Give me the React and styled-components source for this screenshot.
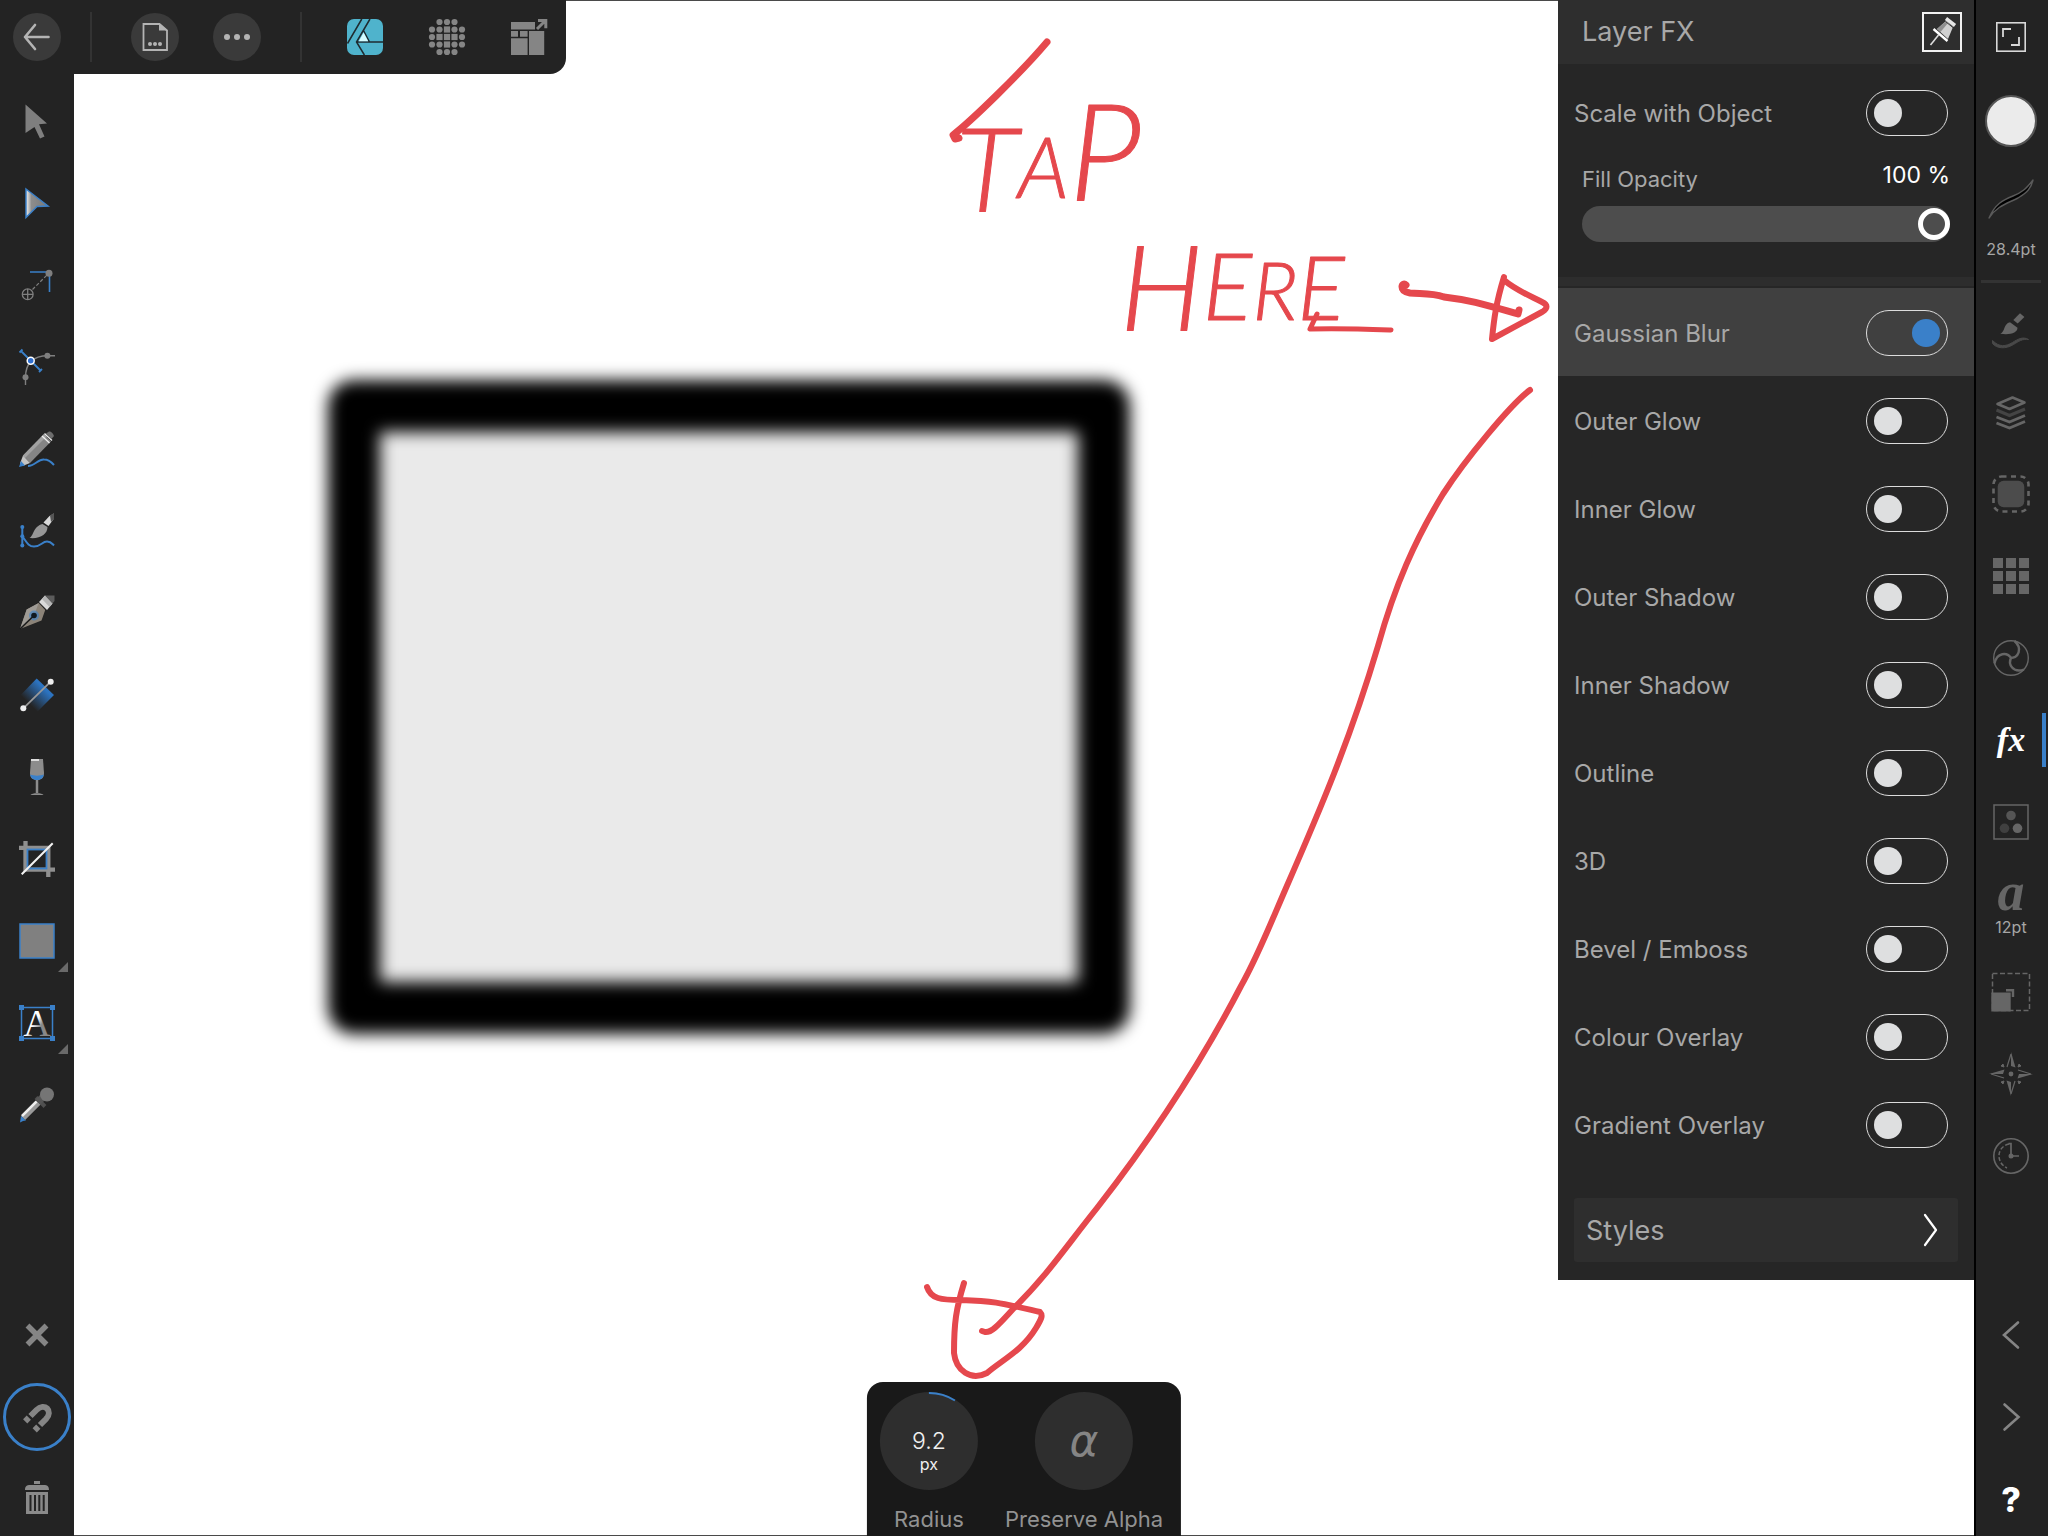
import React, { useState } from "react";
import styled, { createGlobalStyle } from "styled-components";

const BLUE = "#3a80c9";
const GREY = "#7f7f7f";
const DIM = "#666";

const Icon = ({ children, size = 48 }) => (
  <svg width={size} height={size} viewBox="0 0 48 48" fill="none" aria-hidden="true">
    {children}
  </svg>
);

const BackIcon = () => (
  <Icon>
    <path d="M35.5 24H12M22 12l-10 12 10 12" stroke="#b4b4b4" strokeWidth="2.6" strokeLinecap="round" strokeLinejoin="round" />
  </Icon>
);

const DocumentIcon = () => (
  <Icon>
    <path d="M12.5 11h16l7.500 6.500v19.500H12.500z" stroke="#b4b4b4" strokeWidth="1.800" />
    <path d="M28 10.500v7h8.500z" fill="#b4b4b4" />
    {[19, 24, 29].map((x) => <circle key={x} cx={x} cy="31" r="2" fill="#b4b4b4" />)}
  </Icon>
);

const MoreIcon = () => (
  <Icon>
    {[14, 24, 34].map((x) => <circle key={x} cx={x} cy="24" r="3" fill="#b4b4b4" />)}
  </Icon>
);

const DesignerIcon = () => (
  <Icon>
    <rect x="6" y="6" width="36" height="36" rx="7" fill="#4fb3cc" />
    <path d="M20.800 6L6.500 30.500M29 6L15.500 29l7.900 13M15.500 29H42M22.500 17.500L28.500 29" stroke="#1f2b30" strokeWidth="1.500" />
    <path d="M22.600 19.500l4.600 8.800h-9.400z" fill="#d6fcff" />
  </Icon>
);

const PixelIcon = () => {
  const steps = [9, 16.5, 24, 31.500, 39];
  return (
    <Icon>
      {steps.map((y, r) =>
        steps.map((x, c) => {
          const d = Math.abs(r - 2) + Math.abs(c - 2);
          if (d === 4) return null;
          return d < 2
            ? <rect key={`${r}${c}`} x={x - 3.1} y={y - 3.1} width="6.200" height="6.200" fill="#858585" />
            : <circle key={`${r}${c}`} cx={x} cy={y} r="3.1" fill="#858585" />;
        })
      )}
    </Icon>
  );
};

const ExportIcon = () => (
  <Icon>
    <path d="M6 9h24v7.500H6zM6 18h7v5.700H6zM15 18h7.600v5.700H15zM6 25.300h16.600V42H6zM24 18h15.200v24H24z" fill="#858585" />
    <path d="M32 16l7.500-7.500M33 7.500h7.800v7.800" stroke="#858585" strokeWidth="3" />
  </Icon>
);

const MoveIcon = () => (
  <Icon>
    <path d="M12.500 7.500L34 26.500l-8 .8 5.500 12.200-4.500 2-5.500-11.500-9 6z" fill={GREY} />
  </Icon>
);

const NodeIcon = () => (
  <Icon>
    <defs>
      <linearGradient id="node" x1="0" x2="1">
        <stop offset="0" stopColor="#f2f2f2" />
        <stop offset=".25" stopColor="#8d8d8d" />
        <stop offset="1" stopColor="#777" />
      </linearGradient>
    </defs>
    <path d="M13 10l22 17-11 .5L13 38.500z" fill="url(#node)" stroke={BLUE} strokeWidth="1.500" />
  </Icon>
);

const PointTransformIcon = () => (
  <Icon>
    <path d="M17 11h19.500v20" stroke={BLUE} strokeWidth="1.600" />
    <path d="M19.500 28.500L35 13" stroke={GREY} strokeWidth="1.200" strokeDasharray="3.500 2" />
    <circle cx="36" cy="12.300" r="3.500" fill={GREY} />
    <circle cx="14.700" cy="33.300" r="5.400" stroke={GREY} strokeWidth="1.300" />
    <path d="M14.700 28v10.600M9.400 33.300H20" stroke={GREY} strokeWidth="1.300" />
  </Icon>
);

const CornerIcon = () => (
  <Icon>
    <path d="M42 12.700h-7C24 12.700 12.500 17 12.500 34.500V42" stroke={GREY} strokeWidth="1.400" />
    <circle cx="34.400" cy="12.700" r="3" fill={GREY} />
    <circle cx="12.500" cy="34.300" r="3" fill={GREY} />
    <path d="M8 8l19.500 19.500M6.500 9.500l3-3M26 29l3-3" stroke={BLUE} strokeWidth="1.800" />
    <circle cx="17.700" cy="17.700" r="3.500" fill="#2f6fd0" stroke="#fff" strokeWidth="1.500" />
  </Icon>
);

const PencilIcon = () => (
  <Icon>
    <path d="M15 41c7 0 10-7 16-6.500 4 0 7 2 10 5.500" stroke={BLUE} strokeWidth="2" />
    <path d="M10 30.500L31 9l7 7.500-21 21.500z" fill="#858585" />
    <path d="M10 30.500L31 9l2.500 2.600-21.500 21.500z" fill="#a2a2a2" />
    <path d="M10 30.500l7 7.500-7.500 3-2.500-2.500z" fill="#c4c4c4" />
    <path d="M8 36l4 4.500-6 1.500z" fill={BLUE} />
    <path d="M29 11l7.500 7M31.500 8.500l7.500 7" stroke="#eee" strokeWidth="1.300" />
    <path d="M33 8.500L36 6.500q3-.5 5 4.500l-2.500 3z" fill="#6d6d6d" />
  </Icon>
);

const VectorBrushIcon = () => (
  <Icon>
    <path d="M9.300 20v19M9.300 29.300C13 34 15 39.500 21 39.500c7 0 8-5 13-5 4 0 5 2 7 4" stroke={BLUE} strokeWidth="2" />
    {[20, 29.300, 38.500].map((y) => <circle key={y} cx="9.300" cy={y} r="2" fill={BLUE} />)}
    <path d="M30.500 15.500l6-6.500 4.500-2.500v5L35.500 19z" fill="#d9d9d9" />
    <path d="M37 8.500L41 6v6l-3 3z" fill="#555" />
    <path d="M29.500 17l5 3c0 7-7 12-18 11 5-3 3-11 13-14z" fill="#979797" />
  </Icon>
);

const PenIcon = () => (
  <Icon>
    <path d="M7 40l6.700-19.500 12-6.500 6.500 7-3.700 10.500z" fill="#8b8378" />
    <path d="M7 40l6.700-19.500 12-6.500-4.700 12.500z" fill="#9f9b95" />
    <circle cx="21" cy="26.500" r="5" fill={BLUE} opacity=".6" />
    <path d="M7 40l14-13.500" stroke="#1b1b1b" strokeWidth="1.600" />
    <circle cx="21" cy="26.500" r="2.800" fill="#101820" />
    <path d="M26 13l6-6.500 7.500 8-5.500 6.500z" fill="#dadada" />
    <path d="M29 10l3-3.500 7.500 8-3 3.500z" fill="#b5b5b5" />
    <path d="M32 6.500h9.500v5.500l-2 2.500z" fill="#5c5c5c" />
  </Icon>
);

const GradientIcon = () => (
  <Icon>
    <defs>
      <linearGradient id="fillgrad" x1="1" y1="0" x2="0" y2="1">
        <stop offset=".3" stopColor="#2c73c0" />
        <stop offset=".75" stopColor="#242424" />
      </linearGradient>
    </defs>
    <path d="M23.700 7.500L41 24 24.300 40.700 7.700 24z" fill="url(#fillgrad)" />
    <path d="M10.300 37.300L37.700 10.700" stroke="#999" strokeWidth="1.800" />
    <circle cx="10.300" cy="37.300" r="3" fill="#eee" />
    <circle cx="37.700" cy="10.700" r="3" fill="#eee" />
  </Icon>
);

const GlassIcon = () => (
  <Icon>
    <path d="M18 6h12l1 14c0 5-3 7-7 7s-7-2-7-7z" fill="#8c8c8c" />
    <path d="M18 6h8v2h-8z" fill="#ddd" />
    <path d="M17.200 21.500c4 1.500 9.600 1.500 13.600 0-.5 4-3.500 5.500-6.800 5.500s-6.300-1.500-6.800-5.500z" fill={BLUE} />
    <path d="M24 27v13" stroke="#8c8c8c" strokeWidth="2.500" />
    <path d="M17.500 42c1-2.500 12-2.500 13 0z" fill="#8c8c8c" />
  </Icon>
);

const CropIcon = () => (
  <Icon>
    <path d="M12.500 6v28.700H42M6 12.800h29.300V42" stroke="#8f8f8f" strokeWidth="4.300" />
    <rect x="14.500" y="14.500" width="19" height="19" stroke={BLUE} strokeWidth="1.800" />
    <path d="M8.700 39.300l31-31" stroke="#f4f4f4" strokeWidth="2" />
  </Icon>
);

const RectangleIcon = () => (
  <Icon>
    <rect x="7" y="7" width="34" height="34" fill="#808080" stroke={BLUE} strokeWidth="1.500" />
  </Icon>
);

const TextFrameIcon = () => (
  <Icon>
    <defs>
      <linearGradient id="letter" x1="0" y1="0" x2="1" y2="1">
        <stop offset=".45" stopColor="#fff" />
        <stop offset=".6" stopColor="#888" />
      </linearGradient>
    </defs>
    <rect x="8.500" y="8.500" width="31" height="31" stroke={BLUE} strokeWidth="1.500" />
    <path d="M6 6h5v5H6zM37 6h5v5h-5zM6 37h5v5H6zM37 37h5v5h-5z" fill={BLUE} />
    <text x="24" y="37" textAnchor="middle" fontFamily="Liberation Serif, serif" fontSize="38" fill="url(#letter)">A</text>
  </Icon>
);

const DropperIcon = () => (
  <Icon>
    <path d="M25.500 21.500L10 37" stroke="#999" strokeWidth="6" />
    <path d="M23.500 20.500L9 35" stroke="#eee" strokeWidth="2.500" />
    <path d="M8 35l5 4.500-3 .5-3 1.500z" fill={BLUE} />
    <path d="M23 16.500l9 9" stroke="#4f4f4f" strokeWidth="4" />
    <path d="M25 21l7-7" stroke="#555" strokeWidth="7" />
    <circle cx="34" cy="13.500" r="7" fill="#757575" />
  </Icon>
);

const CloseIcon = () => (
  <Icon>
    <path d="M14.500 14.500l19 19M33.500 14.500l-19 19" stroke="#858585" strokeWidth="5.500" />
  </Icon>
);

const MagnetIcon = () => (
  <Icon>
    <path d="M17.500 23l6-6c8-8 17 1 9.500 9l-6 6" stroke="#858585" strokeWidth="6" />
    <path d="M15.800 24.700l-3.600 3.600M25.300 33.700l-3.600 3.600" stroke="#858585" strokeWidth="6" />
  </Icon>
);

const TrashIcon = () => (
  <Icon>
    <path d="M21 6h6v3h-6zM12 15c0-4 2-5 5-5h14c3 0 5 1 5 5z" fill="#8a8a8a" />
    <path d="M13 17h22v22H13z" fill="#8a8a8a" />
    <path d="M17.500 20v16M22 20v16M26.300 20v16M30.700 20v16" stroke="#232323" strokeWidth="2" />
  </Icon>
);

const FullscreenIcon = () => (
  <Icon>
    <rect x="9.800" y="9.800" width="28.400" height="28.400" stroke="#d8d8d8" strokeWidth="1.600" />
    <path d="M16 24v-8h8M24 32h8v-8" stroke="#d8d8d8" strokeWidth="1.800" />
  </Icon>
);

const StrokeIcon = () => (
  <svg width="52" height="44" viewBox="0 0 52 44" aria-hidden="true">
    <path d="M4 41c6-14 14-18 24-22 9-3.500 13-7 20-16-2 8-5 12-15 18-12 6-21 8-29 20z" fill="#000" stroke="#5a5a5a" strokeWidth="1.400" strokeLinejoin="round" />
  </svg>
);

const BrushesIcon = () => (
  <Icon>
    <path d="M5.500 34.500c7 7 13 6 20 2 6-4 11-6 16-3-6-1-10 2-15 5-8 5-17 4-21-1z" fill="#484848" stroke="#484848" strokeWidth="1" />
    <path d="M13.300 27.700c5-2 3-10 9.700-11.500l7.500 5.500c0 5-7 7.500-17.200 6z" fill={DIM} />
    <path d="M26.300 14L33 7.300l4.400 3.700-6.700 6.500z" fill={DIM} />
  </Icon>
);

const LayersIcon = () => (
  <Icon>
    <path d="M25.500 9.500l12 5-15 6.500-12-5z" stroke={DIM} strokeWidth="2.600" strokeLinejoin="round" />
    <path d="M9.500 22l13 5.500 15.500-6.500" stroke="#444" strokeWidth="3" />
    <path d="M9.500 29l13 5 15.500-6.500M9.500 35l13 5 15.500-6.500" stroke={DIM} strokeWidth="2.800" />
  </Icon>
);

const SelectionIcon = () => (
  <Icon>
    <rect x="10.700" y="10.700" width="26.600" height="26.600" rx="6" fill="#4c4c4c" />
    <rect x="6.500" y="6.500" width="35" height="35" rx="8" stroke={DIM} strokeWidth="2.600" strokeDasharray="5 4.500" />
  </Icon>
);

const SwatchesIcon = () => (
  <Icon>
    {[6, 19, 32].map((y) => [6, 19, 32].map((x) => (
      <rect key={`${x}${y}`} x={x} y={y} width="10" height="10" fill={DIM} />
    )))}
  </Icon>
);

const AdjustIcon = () => (
  <Icon>
    <circle cx="24" cy="24" r="17.300" stroke={DIM} strokeWidth="1.400" />
    {[0, 120, 240].map((a) => (
      <path key={a} d="M23 24c8.500 0 13-9.500 4.500-17" transform={`rotate(${a} 24 24)`} stroke={DIM} strokeWidth="2.400" />
    ))}
  </Icon>
);

const ChannelsIcon = () => (
  <Icon>
    <rect x="7" y="7" width="34" height="34" stroke={DIM} strokeWidth="1.500" />
    <circle cx="24" cy="17.500" r="4.800" fill="#555" />
    <circle cx="17.500" cy="30.300" r="4.800" fill="#404040" />
    <circle cx="30.500" cy="30.300" r="4.800" fill={DIM} />
  </Icon>
);

const TransformIcon = () => (
  <Icon>
    <rect x="5.500" y="5.500" width="37" height="37" stroke={DIM} strokeWidth="1.500" strokeDasharray="5 2.500" />
    <path d="M4.300 24.500h19.400v19H4.300z" fill={DIM} />
    <path d="M19 22.300h7v6.700" stroke={DIM} strokeWidth="2.400" />
  </Icon>
);

const NavigatorIcon = () => (
  <Icon>
    {[0, 90, 180, 270].map((a) => (
      <g key={a} transform={`rotate(${a} 24 24)`}>
        <path d="M24 4l-4 13" stroke={DIM} strokeWidth="1.200" />
        <path d="M24 2v14l4.500 1.500z" fill={DIM} />
        <path d="M32 14l2 2-3 1z" stroke={DIM} strokeWidth="1" fill={DIM} />
      </g>
    ))}
    <circle cx="24" cy="24" r="2.400" fill={DIM} />
  </Icon>
);

const HistoryIcon = () => (
  <Icon>
    <circle cx="24" cy="24" r="17.200" stroke={DIM} strokeWidth="1.600" />
    <path d="M22 12c-13 3-13 19-2 24" stroke={DIM} strokeWidth="1.500" strokeDasharray="4 2" />
    <path d="M21.500 11.700h2.500V24h8" stroke={DIM} strokeWidth="1.700" />
    <circle cx="24" cy="24" r="2.500" fill={DIM} />
  </Icon>
);

const PrevIcon = () => (
  <Icon>
    <path d="M31 11.500L17 24l14 12.500" stroke="#858585" strokeWidth="2.600" strokeLinecap="round" />
  </Icon>
);

const NextIcon = () => (
  <Icon>
    <path d="M17.500 11.500l14 12.500-14 12.500" stroke="#858585" strokeWidth="2.600" strokeLinecap="round" />
  </Icon>
);

const PinIcon = () => (
  <svg width="36" height="36" viewBox="0 0 36 36" aria-hidden="true">
    <path d="M6.500 31l8-10" stroke="#ddd" strokeWidth="1.600" />
    <path d="M13 15l9-8 7 6-5 12z" fill="#cfcfcf" />
    <path d="M13 15l9-8 2 2-7.500 9z" fill="#8e8e8e" />
    <path d="M9.500 15l14 12" stroke="#fff" strokeWidth="2.400" />
    <path d="M22 4.500l9 7" stroke="#e5e5e5" strokeWidth="3.500" />
    <path d="M21.500 7.500l8 6.500" stroke="#333" strokeWidth="1" />
  </svg>
);

const tools = [
  { name: "Move", icon: <MoveIcon /> },
  { name: "Node", icon: <NodeIcon /> },
  { name: "Point transform", icon: <PointTransformIcon /> },
  { name: "Corner", icon: <CornerIcon /> },
  { name: "Pencil", icon: <PencilIcon /> },
  { name: "Vector brush", icon: <VectorBrushIcon /> },
  { name: "Pen", icon: <PenIcon /> },
  { name: "Fill", icon: <GradientIcon /> },
  { name: "Transparency", icon: <GlassIcon /> },
  { name: "Vector crop", icon: <CropIcon /> },
  { name: "Rectangle", icon: <RectangleIcon />, more: true },
  { name: "Frame text", icon: <TextFrameIcon />, more: true },
  { name: "Colour picker", icon: <DropperIcon /> },
];

const effectNames = [
  "Gaussian Blur",
  "Outer Glow",
  "Inner Glow",
  "Outer Shadow",
  "Inner Shadow",
  "Outline",
  "3D",
  "Bevel / Emboss",
  "Colour Overlay",
  "Gradient Overlay",
];

function Artwork() {
  return (
    <Canvas viewBox="74 0 1900 1536" preserveAspectRatio="xMidYMid meet">
      <defs>
        <filter id="gaussian" x="-10%" y="-10%" width="120%" height="120%" colorInterpolationFilters="sRGB">
          <feGaussianBlur stdDeviation="8" />
        </filter>
      </defs>
      <rect x="354" y="406" width="750" height="602" fill="#eaeaea" stroke="#000" strokeWidth="52" strokeLinejoin="round" filter="url(#gaussian)" />
      <Ink>
        <path d="M1047 42C1020 74 970 122 953 135l2 4 4-1" strokeWidth="7" />
        <path d="M1406 285c-4-4-8 6 4 8 12 1 22 0 34 4 26 3 42 8 74 17l1-4" strokeWidth="7" />
        <path d="M1504 277c-8 26-10 42-12 62l50-27c6-4 6-7 0-10-16-8-28-13-38-22" />
        <path d="M1317 314l-7 15c28-1 54 0 81 1" strokeWidth="5" />
        <path d="M1530 390C1510 405 1465 460 1443 494C1415 540 1395 585 1378 646C1350 740 1320 810 1286 888C1270 925 1257 958 1241 986C1200 1065 1150 1140 1097 1208C1065 1248 1045 1278 1014 1308C1000 1323 992 1333 985 1332L982 1331" />
        <path d="M927 1287c4 12 14 13 34 13 34 1 40 3 79 12 3 3 2 6-4 16-14 23-34 32-49 45-16 8-31-2-33-20 0-30 2-44 10-70" />
      </Ink>
      <Note x="956" y="212">
        <tspan fontSize="116">T</tspan>
        <tspan fontSize="84" dy="-14">A</tspan>
        <tspan fontSize="134" dy="2">P</tspan>
      </Note>
      <Note x="1120" y="330">
        <tspan fontSize="118">H</tspan>
        <tspan fontSize="92" dy="-10">E</tspan>
        <tspan fontSize="80">R</tspan>
        <tspan fontSize="88">E</tspan>
      </Note>
    </Canvas>
  );
}

function LayerFx() {
  const [scale, setScale] = useState(false);
  const [opacity, setOpacity] = useState(100);
  const [enabled, setEnabled] = useState({ "Gaussian Blur": true });

  const toggle = (name) => setEnabled({ ...enabled, [name]: !enabled[name] });

  return (
    <Panel aria-label="Layer FX">
      <PanelHeader>
        <PanelTitle>Layer FX</PanelTitle>
        <PinButton aria-label="Pin panel"><PinIcon /></PinButton>
      </PanelHeader>
      <General>
        <EffectRow>
          Scale with Object
          <Switch type="checkbox" checked={scale} onChange={() => setScale(!scale)} />
        </EffectRow>
        <Opacity>
          <OpacityHead>
            <label htmlFor="opacity">Fill Opacity</label>
            <output htmlFor="opacity">{opacity} %</output>
          </OpacityHead>
          <Slider id="opacity" type="range" min="0" max="100" value={opacity} onChange={(e) => setOpacity(e.target.value)} />
        </Opacity>
      </General>
      <Divider />
      {effectNames.map((name) => (
        <EffectRow key={name} $active={name === "Gaussian Blur"}>
          {name}
          <Switch type="checkbox" checked={!!enabled[name]} onChange={() => toggle(name)} />
        </EffectRow>
      ))}
      <StylesButton>
        Styles
        <svg width="18" height="36" viewBox="0 0 18 36" fill="none" aria-hidden="true">
          <path d="M3 3l11 15L3 33" stroke="#fff" strokeWidth="2.200" strokeLinecap="round" strokeLinejoin="round" />
        </svg>
      </StylesButton>
    </Panel>
  );
}

function App() {
  return (
    <Workspace>
      <GlobalStyle />
      <Rail aria-label="Tools">
        <RailTop>
          <RoundButton aria-label="Back"><BackIcon /></RoundButton>
        </RailTop>
        {tools.map((tool) => (
          <RailButton key={tool.name} aria-label={tool.name} $more={tool.more}>{tool.icon}</RailButton>
        ))}
        <RailBottom>
          <RailButton aria-label="Deselect"><CloseIcon /></RailButton>
          <RailButton aria-label="Snapping" $ring><MagnetIcon /></RailButton>
          <RailButton aria-label="Delete"><TrashIcon /></RailButton>
        </RailBottom>
      </Rail>

      <Stage>
        <Artwork />
        <TopBar>
          <Separator />
          <Slot><RoundButton aria-label="Document"><DocumentIcon /></RoundButton></Slot>
          <Slot><RoundButton aria-label="Edit"><MoreIcon /></RoundButton></Slot>
          <Separator />
          <RailButton aria-label="Designer persona"><DesignerIcon /></RailButton>
          <RailButton aria-label="Pixel persona"><PixelIcon /></RailButton>
          <RailButton aria-label="Export persona"><ExportIcon /></RailButton>
        </TopBar>
        <LayerFx />
        <ContextBar>
          <Control>
            <Dial aria-label="Radius">
              <Arc viewBox="0 0 98 98" aria-hidden="true">
                <path d="M49 1a48 48 0 0 1 26 7.500" fill="none" stroke={BLUE} strokeWidth="2" />
              </Arc>
              9.2
              <small>px</small>
            </Dial>
            Radius
          </Control>
          <Control>
            <Dial aria-label="Preserve Alpha" $symbol>α</Dial>
            Preserve Alpha
          </Control>
        </ContextBar>
      </Stage>

      <Rail as="aside" aria-label="Studios" $right>
        <RailTop>
          <RailButton aria-label="Full screen"><FullscreenIcon /></RailButton>
        </RailTop>
        <RailButton aria-label="Colour"><FillSwatch /></RailButton>
        <StrokeButton aria-label="Stroke 28.4pt">
          <StrokeIcon />
          28.4pt
        </StrokeButton>
        <RailRule />
        <RailButton aria-label="Brushes"><BrushesIcon /></RailButton>
        <RailButton aria-label="Layers"><LayersIcon /></RailButton>
        <RailButton aria-label="Selection"><SelectionIcon /></RailButton>
        <RailButton aria-label="Swatches"><SwatchesIcon /></RailButton>
        <RailButton aria-label="Adjustments"><AdjustIcon /></RailButton>
        <FxButton aria-label="Layer FX">fx</FxButton>
        <RailButton aria-label="Channels"><ChannelsIcon /></RailButton>
        <TextButton aria-label="Text 12pt">
          <em>a</em>
          12pt
        </TextButton>
        <RailButton aria-label="Transform"><TransformIcon /></RailButton>
        <RailButton aria-label="Navigator"><NavigatorIcon /></RailButton>
        <RailButton aria-label="History"><HistoryIcon /></RailButton>
        <RailBottom>
          <RailButton aria-label="Undo"><PrevIcon /></RailButton>
          <RailButton aria-label="Redo"><NextIcon /></RailButton>
          <HelpButton aria-label="Help">?</HelpButton>
        </RailBottom>
      </Rail>
    </Workspace>
  );
}

export default App;

const GlobalStyle = createGlobalStyle`
  * {
    box-sizing: border-box;
  }

  body {
    margin: 0;
    background: #fff;
    font-family: Inter, "Liberation Sans", sans-serif;
  }

  button {
    margin: 0;
    padding: 0;
    border: none;
    background: none;
    color: inherit;
    font: inherit;
    cursor: pointer;
  }

  svg {
    display: block;
  }
`;

const Workspace = styled.div`
  display: flex;
  min-height: 100vh;
`;

const Rail = styled.nav`
  display: flex;
  flex-direction: column;
  gap: 8px;
  flex: none;
  width: 74px;
  padding-right: ${(p) => (p.$right ? "2px" : "0")};
  background: #232323;
  border-left: ${(p) => (p.$right ? "2px solid #000" : "none")};
`;

const RailTop = styled.div`
  display: flex;
  align-items: center;
  justify-content: center;
  height: 74px;
  margin-bottom: 2px;
`;

const RailBottom = styled.div`
  display: flex;
  flex-direction: column;
  gap: 8px;
  margin-top: auto;
`;

const RailButton = styled.button`
  position: relative;
  display: flex;
  align-items: center;
  justify-content: center;
  flex: none;
  width: 100%;
  height: 74px;

  &::after {
    content: "";
    display: ${(p) => (p.$more || p.$ring ? "block" : "none")};
    position: absolute;
    ${(p) => p.$more && `
      right: 6px;
      bottom: 6px;
      border-left: 10px solid transparent;
      border-bottom: 10px solid #6a6a6a;
    `}
    ${(p) => p.$ring && `
      inset: 3px;
      border: 3px solid ${BLUE};
      border-radius: 50%;
    `}
  }
`;

const RoundButton = styled.button`
  display: flex;
  align-items: center;
  justify-content: center;
  width: 48px;
  height: 48px;
  border-radius: 50%;
  background: #3a3a3a;
`;

const FillSwatch = styled.span`
  width: 52px;
  height: 52px;
  border: 2px solid #555;
  border-radius: 50%;
  background: #ebebeb;
`;

const StrokeButton = styled.button`
  display: flex;
  flex-direction: column;
  align-items: center;
  justify-content: space-between;
  height: 98px;
  padding: 11px 0 3px;
  color: #a6a6a6;
  font-size: 16px;
  line-height: 24px;
`;

const RailRule = styled.hr`
  width: 60px;
  height: 3px;
  margin: 8px auto 2px 5px;
  border: none;
  background: #333;
`;

const FxButton = styled(RailButton)`
  color: #fff;
  font-family: "Liberation Serif", serif;
  font-size: 34px;
  font-style: italic;
  font-weight: 700;

  &::after {
    display: block;
    top: 10px;
    right: 0;
    width: 4px;
    height: 54px;
    background: ${BLUE};
  }
`;

const TextButton = styled.button`
  display: flex;
  flex-direction: column;
  align-items: center;
  height: 80px;
  color: #a6a6a6;
  font-size: 16px;
  line-height: 24px;

  em {
    height: 48px;
    color: ${DIM};
    font-family: "Liberation Serif", serif;
    font-size: 54px;
    font-weight: 700;
    line-height: 50px;
  }
`;

const HelpButton = styled(RailButton)`
  color: #fff;
  font-size: 34px;
  font-weight: 800;
`;

const Stage = styled.main`
  position: relative;
  flex: 1;
  min-width: 0;
  background: #fff;
  box-shadow: inset 0 1px #4a4a4a, inset 0 -1px #4a4a4a;
`;

const Canvas = styled.svg`
  position: absolute;
  inset: 0;
  width: 100%;
  height: 100%;
`;

const Ink = styled.g`
  fill: none;
  stroke: #e5484d;
  stroke-width: 6px;
  stroke-linecap: round;
  stroke-linejoin: round;
`;

const Note = styled.text`
  fill: #e5484d;
  stroke: #e5484d;
  stroke-width: 1px;
  stroke-linejoin: round;
  font-family: Lato, "Liberation Sans", sans-serif;
  font-style: italic;
  font-weight: 300;
`;

const TopBar = styled.header`
  position: absolute;
  top: 0;
  left: 0;
  display: flex;
  align-items: center;
  height: 74px;
  border-bottom-right-radius: 16px;
  background: #232323;

  ${RailButton} {
    width: 74px;
  }

  ${RailButton} + ${RailButton} {
    margin-left: 8px;
  }
`;

const Slot = styled.div`
  display: flex;
  justify-content: center;
  width: 74px;

  & + & {
    margin-left: 8px;
  }
`;

const Separator = styled.span`
  width: 2px;
  height: 50px;
  margin: 0 26px;
  background: #333;

  &:first-child {
    margin-left: 16px;
  }
`;

const Panel = styled.section`
  position: absolute;
  top: 0;
  right: 0;
  width: 416px;
  padding-bottom: 18px;
  background: #262626;
  color: #a8a8a8;
  font-size: 24px;
`;

const PanelHeader = styled.div`
  display: flex;
  align-items: center;
  justify-content: space-between;
  height: 64px;
  padding: 0 12px 0 24px;
  background: #2e2e2e;
`;

const PanelTitle = styled.h1`
  margin: 0;
  padding-bottom: 2px;
  font-size: 27px;
  font-weight: 400;
`;

const PinButton = styled.button`
  width: 40px;
  height: 40px;
  border: 2px solid #f2f2f2;
`;

const General = styled.div`
  padding: 4px 0 35px;
`;

const EffectRow = styled.label`
  display: flex;
  align-items: center;
  justify-content: space-between;
  height: 88px;
  padding: 2px 26px 0 16px;
  background: ${(p) => (p.$active ? "#404040" : "none")};
`;

const Switch = styled.input`
  display: flex;
  align-items: center;
  appearance: none;
  width: 82px;
  height: 46px;
  margin: 0;
  padding: 0 7px;
  border: 1px solid #dcdcdc;
  border-radius: 23px;
  cursor: pointer;

  &::before {
    content: "";
    width: 28px;
    height: 28px;
    border-radius: 50%;
    background: #dedfe0;
  }

  &:checked::before {
    margin-left: auto;
    background: ${BLUE};
  }
`;

const Opacity = styled.div`
  padding: 5px 24px 0;
`;

const OpacityHead = styled.div`
  display: flex;
  justify-content: space-between;
  height: 45px;
  font-size: 22px;
  line-height: 28px;

  label {
    padding-top: 4px;
  }

  output {
    color: #fff;
    font-size: 23px;
  }
`;

const Slider = styled.input`
  display: block;
  appearance: none;
  width: 100%;
  height: 36px;
  margin: 0;
  border-radius: 18px;
  background: #4d4d4d;

  &::-webkit-slider-thumb {
    appearance: none;
    width: 32px;
    height: 32px;
    border: 5px solid #fff;
    border-radius: 50%;
    background: #4d4d4d;
  }
`;

const Divider = styled.hr`
  height: 11px;
  margin: 0;
  border: none;
  border-bottom: 2px solid #262626;
  background: #2d2d2d;
`;

const StylesButton = styled.button`
  display: flex;
  align-items: center;
  justify-content: space-between;
  width: calc(100% - 32px);
  height: 64px;
  margin: 30px 16px 0;
  padding: 0 18px 0 12px;
  border-radius: 3px;
  background: #2e2e2e;
  font-size: 27px;
`;

const ContextBar = styled.div`
  position: absolute;
  bottom: 0;
  left: 50%;
  display: flex;
  gap: 27px;
  height: 154px;
  padding: 10px 18px 0 13px;
  border-radius: 16px 16px 0 0;
  background: #191919;
  transform: translateX(-50%);
`;

const Control = styled.div`
  display: flex;
  flex-direction: column;
  align-items: center;
  gap: 15px;
  color: #929292;
  font-size: 22px;
  line-height: 28px;
  white-space: nowrap;
`;

const Dial = styled.button`
  position: relative;
  display: flex;
  flex-direction: column;
  align-items: center;
  justify-content: center;
  width: 98px;
  height: 98px;
  padding-top: ${(p) => (p.$symbol ? "0" : "22px")};
  border-radius: 50%;
  background: #2e2e2e;
  color: ${(p) => (p.$symbol ? "#858585" : "#f0f0f0")};
  font-family: ${(p) => (p.$symbol ? '"DejaVu Sans", sans-serif' : "inherit")};
  font-size: ${(p) => (p.$symbol ? "44px" : "23px")};
  font-style: ${(p) => (p.$symbol ? "italic" : "normal")};
  font-weight: ${(p) => (p.$symbol ? "400" : "300")};
  line-height: 24px;

  small {
    font-size: 16px;
    font-weight: 400;
    line-height: 22px;
  }
`;

const Arc = styled.svg`
  position: absolute;
  inset: 0;
`;
